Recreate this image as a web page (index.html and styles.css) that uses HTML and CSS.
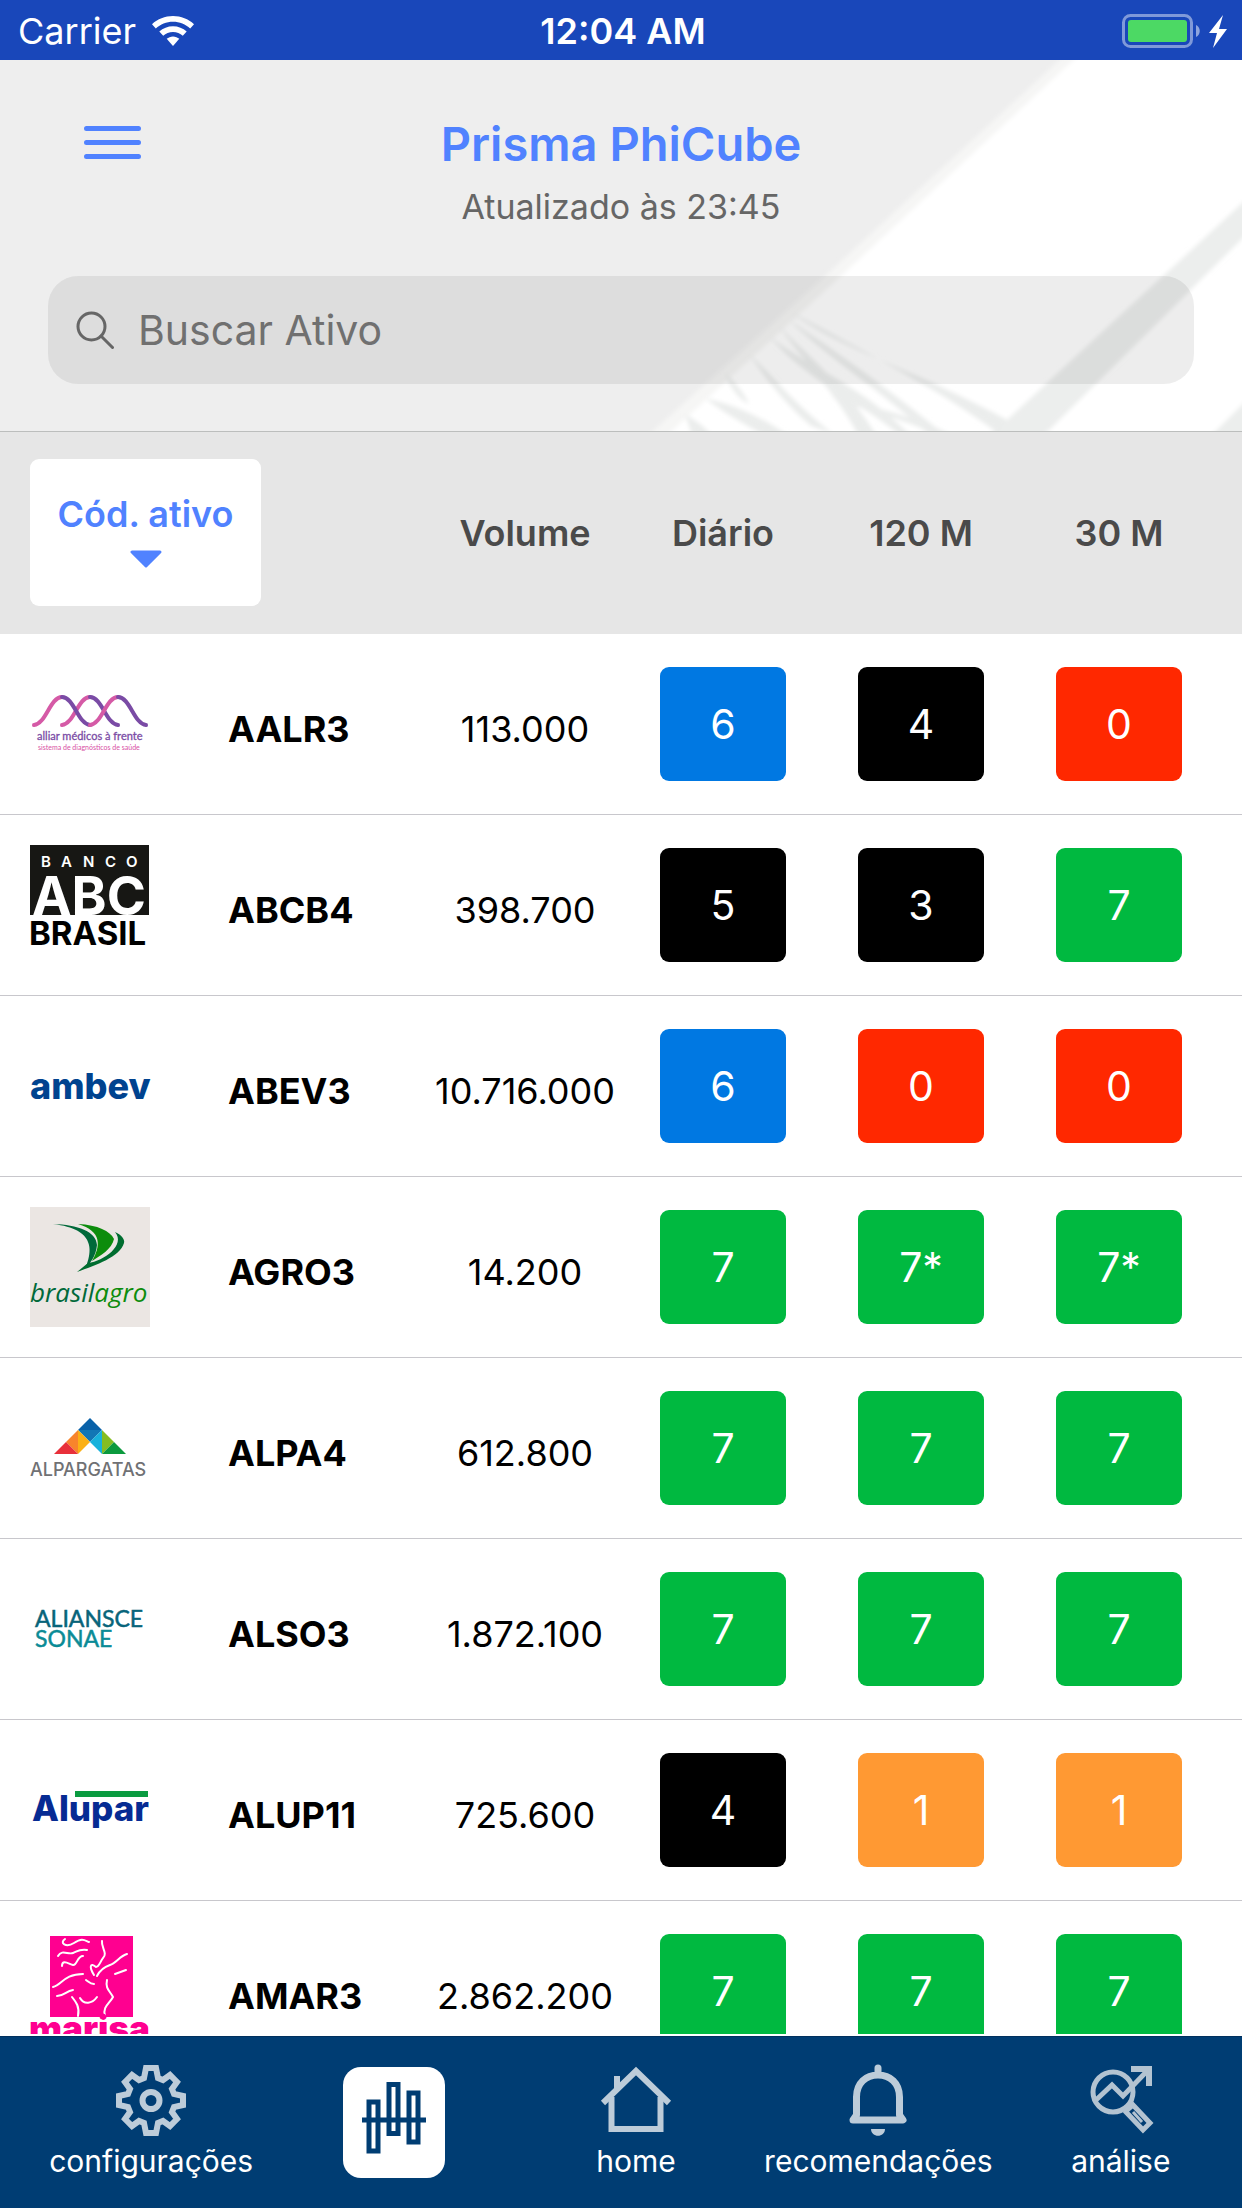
FILE: index.html
```html
<!DOCTYPE html>
<html lang="pt-BR">
<head>
  <meta charset="UTF-8" />
  <meta name="viewport" content="width=device-width, initial-scale=1.0" />
  <title>Prisma PhiCube</title>
  <link rel="stylesheet" href="styles.css">
</head>
<body>

  <div class="status-bar">
    <div class="status-left">
      <span>Carrier</span>
      <svg width="42" height="30" viewBox="0 0 42 30" fill="#fff">
        <path d="M21 0C13 0 5.600 3 0 8.200l3.800 4.300C8.400 8.300 14.400 5.800 21 5.800s12.600 2.500 17.200 6.700L42 8.200C36.400 3 29 0 21 0z" />
        <path d="M21 10.200c-5.200 0-10 2-13.700 5.300l3.900 4.300c2.600-2.400 6-3.800 9.800-3.800s7.200 1.400 9.800 3.800l3.900-4.300C31 12.200 26.200 10.200 21 10.200z" />
        <path d="M21 20.400c-2.400 0-4.600.9-6.300 2.400L21 30l6.300-7.200c-1.700-1.500-3.900-2.400-6.300-2.400z" />
      </svg>
    </div>
    <div class="status-time">12:04 AM</div>
    <div class="status-right">
      <svg width="106" height="34" viewBox="0 0 106 34">
        <rect x="1.500" y="1.500" width="68" height="31" rx="7" fill="none" stroke="#7f99d9" stroke-width="3" />
        <rect x="6" y="6" width="59" height="22" rx="3" fill="#4cd964" />
        <path d="M74 11c5 2 5 10 0 12z" fill="#8ea5de" />
        <path d="M101 1L87 19h8l-4 15 14-19h-8z" fill="#fff" />
      </svg>
    </div>
  </div>

  <header class="header">
    <svg class="header-art" viewBox="0 0 621 371" preserveAspectRatio="xMaxYMin slice" aria-hidden="true">
      <defs>
        <filter id="soft"><feGaussianBlur stdDeviation="2" /></filter>
      </defs>
      <path d="M460-20L204 216 32 371 10 391H640V-20z" fill="#f6f6f5" filter="url(#soft)" />
      <path d="M474-20L220 216 51 371 30 391H640V-20z" fill="#fff" filter="url(#soft)" />
      <g filter="url(#soft)">
        <path d="M630 135L360 384h54L630 170z" fill="#eceeed" />
        <path d="M580 386L630 336V386z" fill="#eceeed" />
        <g fill="#ebedec">
          <path d="M170 252C220 290 300 312 386 360L378 374C320 330 240 290 170 252z" />
          <path d="M168 260C220 296 270 330 330 380H314C260 330 210 300 168 260z" />
          <path d="M158 266C190 300 230 330 258 380H240C220 340 190 310 158 266z" />
          <path d="M148 276C190 310 240 324 290 376H280C240 342 190 324 148 276z" />
          <path d="M128 294C155 320 175 345 212 374L190 366C165 345 150 325 128 294z" />
          <path d="M208 336C240 346 290 352 340 380H326C290 360 240 350 208 336z" />
          <path d="M104 312C112 322 122 330 128 344 116 338 108 326 104 312z" />
          <path d="M84 338C110 344 140 356 168 376H144C124 364 104 354 84 338z" />
          <path d="M64 354C76 362 84 366 92 378H72z" />
        </g>
      </g>
    </svg>

    <div class="header-top">
      <button class="menu-btn" type="button" aria-label="Menu">
        <svg width="57" height="33" viewBox="0 0 57 33" stroke="#5082ff" stroke-width="5" stroke-linecap="round">
          <path d="M2.500 2.500h52M2.500 16.500h52M2.500 30.500h52" />
        </svg>
      </button>
      <div class="header-text">
        <h1>Prisma PhiCube</h1>
        <p>Atualizado às 23:45</p>
      </div>
    </div>

    <label class="search">
      <svg width="38" height="38" viewBox="0 0 38 38" fill="none" stroke="#666" stroke-width="3">
        <circle cx="15.500" cy="15.500" r="13.500" />
        <path d="M25 25l11.500 11.500" stroke-linecap="round" />
      </svg>
      <input type="search" placeholder="Buscar Ativo" aria-label="Buscar Ativo">
    </label>
  </header>

  <main class="list">
    <table class="assets">
      <colgroup>
        <col class="col-logo"><col><col><col><col><col class="col-last">
      </colgroup>
      <thead>
        <tr>
          <th class="sort-cell" colspan="2">
            <button class="sort-btn" type="button">
              Cód. ativo
              <svg width="34" height="18" viewBox="0 0 34 18"><path d="M3 2h28L17 16z" fill="#5082ff" stroke="#5082ff" stroke-width="3" stroke-linejoin="round" /></svg>
            </button>
          </th>
          <th>Volume</th>
          <th>Diário</th>
          <th>120 M</th>
          <th class="last">30 M</th>
        </tr>
      </thead>
      <tbody>
        <tr>
          <td class="logo">
            <svg viewBox="0 0 120 120">
              <g fill="none" stroke-width="4" stroke-linecap="round">
                <path d="M4 61C16 60 20 33 32 33" stroke="#d55aa6" />
                <path d="M32 61C44 60 48 33 60 33" stroke="#d55aa6" />
                <path d="M60 33C72 33 76 60 88 61" stroke="#7a4ba5" />
                <path d="M32 33C44 33 48 60 60 61" stroke="#7a4ba5" />
                <path d="M60 61C72 60 76 33 88 33" stroke="#d55aa6" />
                <path d="M88 33C100 33 104 60 116 61" stroke="#7a4ba5" />
              </g>
              <text x="7" y="76" font-family="Lato" font-size="11" fill="#7a4ba5" stroke="#7a4ba5" stroke-width=".3">alliar médicos à frente</text>
              <text x="8" y="86" font-family="Lato" font-size="7" fill="#d84fa5">sistema de diagnósticos de saúde</text>
            </svg>
          </td>
          <td class="code">AALR3</td>
          <td class="volume">113.000</td>
          <td><span class="score blue">6</span></td>
          <td><span class="score black">4</span></td>
          <td class="last"><span class="score red">0</span></td>
        </tr>
        <tr>
          <td class="logo">
            <svg viewBox="0 0 120 120" font-family="Inter" font-weight="700">
              <path d="M0 0h119v70H0z" fill="#171714" />
              <text x="11 31 53 75 96" y="22" font-size="15" font-weight="600" fill="#fff">BANCO</text>
              <text x="2" y="70" font-size="53" fill="#fff">ABC</text>
              <text x="-1" y="100" font-size="33">BRASIL</text>
            </svg>
          </td>
          <td class="code">ABCB4</td>
          <td class="volume">398.700</td>
          <td><span class="score black">5</span></td>
          <td><span class="score black">3</span></td>
          <td class="last"><span class="score green">7</span></td>
        </tr>
        <tr>
          <td class="logo">
            <svg viewBox="0 0 120 120">
              <text x="0" y="73" font-family="Inter" font-weight="800" font-size="36" fill="#00438f">ambev</text>
            </svg>
          </td>
          <td class="code">ABEV3</td>
          <td class="volume">10.716.000</td>
          <td><span class="score blue">6</span></td>
          <td><span class="score red">0</span></td>
          <td class="last"><span class="score red">0</span></td>
        </tr>
        <tr>
          <td class="logo">
            <svg viewBox="0 0 120 120">
              <path d="M0 0h120v120H0z" fill="#ebe6e3" />
              <path d="M23 17C48 18 66 24 67 38 66 49 60 57 56 60 62 44 66 22 23 17z" fill="#00693a" />
              <path d="M48 17C68 18 80 24 84 32 82 42 70 49 62 54 71 39 72 24 48 17z" fill="#0c8c0c" />
              <path d="M85 25C92 28 95 33 94 36 90 50 66 58 47 65L58 56C74 54 96 38 85 25z" fill="#006d30" />
              <text x="0" y="95" font-family="Open Sans" font-style="italic" font-weight="500" font-size="26" fill="#00693a">brasil<tspan fill="#0c8c0c">agro</tspan></text>
            </svg>
          </td>
          <td class="code">AGRO3</td>
          <td class="volume">14.200</td>
          <td><span class="score green">7</span></td>
          <td><span class="score green">7*</span></td>
          <td class="last"><span class="score green">7*</span></td>
        </tr>
        <tr>
          <td class="logo">
            <svg viewBox="0 0 120 120">
              <path d="M60 30L48 42h24z" fill="#0961a8" />
              <path d="M48 42h24L60 54z" fill="#1277b5" />
              <path d="M48 42L36 54l12 12z" fill="#f8842c" />
              <path d="M36 54L24 66h24z" fill="#e8303a" />
              <path d="M48 42l12 12-12 12z" fill="#fbb015" />
              <path d="M72 42L60 54l12 12z" fill="#18b2dc" />
              <path d="M72 42l12 12-12 12z" fill="#85bd22" />
              <path d="M84 54l12 12H72z" fill="#0c9a3e" />
              <text x="0" y="88" font-family="Inter" font-weight="500" font-size="18" fill="#707174">ALPARGATAS</text>
            </svg>
          </td>
          <td class="code">ALPA4</td>
          <td class="volume">612.800</td>
          <td><span class="score green">7</span></td>
          <td><span class="score green">7</span></td>
          <td class="last"><span class="score green">7</span></td>
        </tr>
        <tr>
          <td class="logo">
            <svg viewBox="0 0 120 120" font-family="Lato">
              <text x="5" y="58" font-size="23" fill="#08647a" stroke="#08647a" stroke-width=".5">ALIANSCE</text>
              <text x="5" y="78" font-size="23" fill="#0a8b96" stroke="#0a8b96" stroke-width=".5">SONAE</text>
            </svg>
          </td>
          <td class="code">ALSO3</td>
          <td class="volume">1.872.100</td>
          <td><span class="score green">7</span></td>
          <td><span class="score green">7</span></td>
          <td class="last"><span class="score green">7</span></td>
        </tr>
        <tr>
          <td class="logo">
            <svg viewBox="0 0 120 120">
              <text x="2" y="71" font-family="Inter" font-weight="800" font-size="35" fill="#062b93">Alupar</text>
              <path d="M45 41h73v6H45z" fill="#0a9b40" />
            </svg>
          </td>
          <td class="code">ALUP11</td>
          <td class="volume">725.600</td>
          <td><span class="score black">4</span></td>
          <td><span class="score orange">1</span></td>
          <td class="last"><span class="score orange">1</span></td>
        </tr>
        <tr>
          <td class="logo">
            <svg viewBox="0 0 120 120">
              <path d="M20 5h83v81H20z" fill="#ff0090" />
              <g fill="none" stroke="#fff" stroke-width="2" stroke-linecap="round" stroke-linejoin="round">
                <path d="M35 8C29 12 36 17 44 12S54 9 59 11" />
                <path d="M28 25C32 18 38 24 43 22S49 18 57 19" />
                <path d="M32 35C32 28 39 33 43 34S47 25 53 25" />
                <path d="M72 10C71 17 78 22 73 27 70 31 69 36 66 36 60 31 59 36 64 44" />
                <path d="M97 23C90 25 86 32 80 34S70 39 67 45" />
                <path d="M96 39L85 43" />
                <path d="M23 56C32 54 34 43 53 43" />
                <path d="M27 65C34 65 36 60 43 59" />
                <path d="M56 49C59 51 60 53 64 53" />
                <path d="M77 49C75 58 80 60 83 66 80 72 72 76 75 85" />
                <path d="M42 66C46 71 50 76 48 85" />
                <path d="M50 67C54 74 62 73 67 66" />
              </g>
              <text x="-1" y="110" font-family="Inter" font-weight="900" font-size="35" fill="#ff0090">marisa</text>
            </svg>
          </td>
          <td class="code">AMAR3</td>
          <td class="volume">2.862.200</td>
          <td><span class="score green">7</span></td>
          <td><span class="score green">7</span></td>
          <td class="last"><span class="score green">7</span></td>
        </tr>
      </tbody>
    </table>
  </main>

  <nav class="tab-bar">
    <a href="#configuracoes">
      <svg width="72" height="72" viewBox="0 0 72 72" fill="none" stroke="#bdccd9" stroke-width="6">
        <path d="M31 4h10l2 10 5 2 7-5 7 7-5 7 2 5 9 2v9l-9 2-2 5 5 7-7 7-7-5-5 2-2 10H31l-2-10-5-2-7 5-7-7 5-7-2-5-9-2v-9l9-2 2-5-5-7 7-7 7 5 5-2z" />
        <circle cx="36" cy="36.500" r="8.500" />
      </svg>
      <span>configurações</span>
    </a>
    <a class="active" href="#prisma" aria-label="prisma">
      <svg width="64" height="72" viewBox="0 0 64 72" fill="none" stroke="#003d73" stroke-width="5">
        <path d="M7 20h9v49H7zM27 2.500h9v49h-9zM47 11h9v49h-9zM0 38h64" />
      </svg>
    </a>
    <a href="#home">
      <svg width="72" height="72" viewBox="0 0 72 72" fill="none" stroke="#bdccd9" stroke-width="6">
        <path d="M3 39L36 7l33 32" />
        <path d="M11.500 33v32h49V33" />
        <path d="M17 12v14" />
      </svg>
      <span>home</span>
    </a>
    <a href="#recomendacoes">
      <svg width="72" height="72" viewBox="0 0 72 72" fill="none" stroke="#bdccd9" stroke-width="7" stroke-linejoin="round" stroke-linecap="round">
        <path d="M36 4v6M14.500 51V33C14.500 19 24 11 36 11s21.500 8 21.500 22v18l3.500 5H11z" />
        <path d="M29 65h14c0 9-14 9-14 0z" fill="#bdccd9" stroke="none" />
      </svg>
      <span>recomendações</span>
    </a>
    <a href="#analise">
      <svg width="72" height="72" viewBox="0 0 72 72" fill="none" stroke="#b3c3d1" stroke-width="5">
        <circle cx="28" cy="28" r="20" />
        <path d="M11 36l16-15 11 11L64 5" />
        <path d="M46 5h18v17" stroke-width="6" />
        <path d="M42 46l6-5 17 18-7 7-17-18z" />
        <path d="M48 48l9 10" stroke-width="3" />
      </svg>
      <span>análise</span>
    </a>
  </nav>

</body>
</html>
```

FILE: styles.css
```css
* {
  margin: 0;
  padding: 0;
  box-sizing: border-box;
}

body {
  height: 100vh;
  display: flex;
  flex-direction: column;
  font-family: Inter, "Liberation Sans", sans-serif;
  background: #fff;
  color: #000;
  overflow: hidden;
}

button {
  font: inherit;
  border: none;
  background: none;
  cursor: pointer;
}

svg {
  display: block;
}

/* status bar */
.status-bar {
  flex: none;
  height: 60px;
  padding: 2px 14px 0 18px;
  display: grid;
  grid-template-columns: 1fr auto 1fr;
  align-items: center;
  background: #1947ba;
  color: #fff;
  font-size: 36px;
}

.status-left {
  display: flex;
  align-items: center;
  gap: 16px;
}

.status-time {
  font-weight: 600;
}

.status-right {
  justify-self: end;
}

/* header */
.header {
  flex: none;
  position: relative;
  padding: 54px 48px 47px;
  background: #eee;
  border-bottom: 1px solid #bcbebd;
}

.header-art {
  position: absolute;
  top: 0;
  right: 0;
  width: 50%;
  height: 100%;
}

.header-top {
  position: relative;
  display: grid;
  grid-template-columns: 1fr auto 1fr;
  align-items: start;
}

.menu-btn {
  justify-self: start;
  padding: 12px 36px;
}

.header-text {
  text-align: center;
}

.header h1 {
  font-size: 47px;
  line-height: 60px;
  font-weight: 600;
  color: #5082ff;
}

.header p {
  margin-top: 13px;
  font-size: 34px;
  line-height: 40px;
  color: #666;
}

.search {
  position: relative;
  margin-top: 49px;
  height: 108px;
  padding: 0 28px;
  display: flex;
  align-items: center;
  gap: 24px;
  border-radius: 30px;
  background: rgba(0, 0, 0, 0.07);
}

.search input {
  flex: 1;
  min-width: 0;
  border: none;
  outline: none;
  background: none;
  font-family: inherit;
  font-size: 41px;
  color: #333;
}

.search input::placeholder {
  color: #707070;
}

/* list */
.list {
  flex: 1;
  min-height: 0;
  overflow: hidden;
  border-bottom: 2px solid #fff;
}

.assets {
  width: 100%;
  table-layout: fixed;
  border-collapse: separate;
  border-spacing: 0;
}

.col-logo {
  width: 228px;
}

.col-last {
  width: 222px;
}

.assets th {
  padding: 27px 0 28px;
  background: #e6e6e6;
  font-size: 36px;
  font-weight: 600;
  color: #4a4a4a;
}

.assets .sort-cell {
  padding-left: 30px;
  text-align: left;
}

.sort-btn {
  width: 231px;
  height: 147px;
  padding-bottom: 6px;
  display: flex;
  flex-direction: column;
  align-items: center;
  justify-content: center;
  gap: 14px;
  border-radius: 9px;
  background: #fff;
  color: #5082ff;
}

.assets td {
  padding: 30px 0;
  border-bottom: 1px solid #c8c7cc;
  text-align: center;
  vertical-align: middle;
  font-size: 36px;
}

.assets .last {
  padding-right: 24px;
}

.assets .logo {
  padding-left: 30px;
}

.logo svg {
  width: 120px;
  height: 120px;
  overflow: visible;
}

.assets .code,
.assets .volume {
  padding-top: 40px;
}

.assets .code {
  text-align: left;
  font-weight: 700;
}

.score {
  display: flex;
  align-items: center;
  justify-content: center;
  width: 126px;
  height: 114px;
  margin: 0 auto;
  border-radius: 9px;
  font-size: 41px;
  color: #fff;
}

.blue {
  background: #0078e2;
}

.black {
  background: #000;
}

.red {
  background: #ff2800;
}

.green {
  background: #00b940;
}

.orange {
  background: #ff9933;
}

/* bottom tabs */
.tab-bar {
  flex: none;
  height: 172px;
  padding: 27px 0 0 30px;
  display: grid;
  grid-template-columns: repeat(5, minmax(0, 1fr));
  justify-items: center;
  align-items: start;
  border-top: 1px solid #00305e;
  background: #003d73;
}

.tab-bar a {
  display: flex;
  flex-direction: column;
  align-items: center;
  gap: 7px;
  color: #fff;
  font-size: 30px;
  line-height: 36px;
  text-decoration: none;
}

.tab-bar .active {
  margin-top: 3px;
  padding: 15px 19px 24px;
  border-radius: 18px;
  background: #fff;
}
```
